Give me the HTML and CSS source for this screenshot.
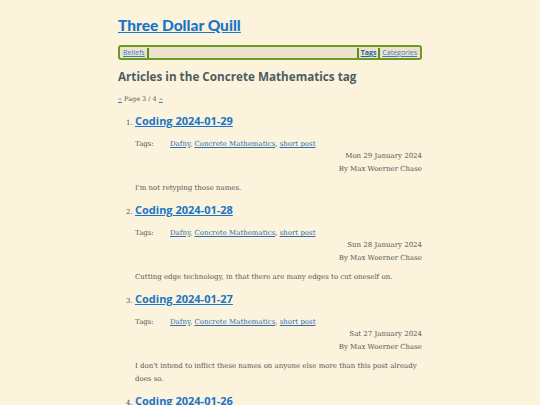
FILE: index.html
```html
<!DOCTYPE html>
<html>
<head>
<meta charset="utf-8">
<link rel="stylesheet" href="styles.css">
</head>
<body>
<div class="page">
  <header class="site-header">
    <h1 class="site-title"><a href="#">Three Dollar Quill</a></h1>
    <nav class="nav">
      <a class="nav-link" href="#">Beliefs</a>
      <span class="sep"></span>
      <span class="nav-fill"></span>
      <span class="sep"></span>
      <a class="nav-link nav-current" href="#">Tags</a>
      <span class="sep"></span>
      <a class="nav-link" href="#">Categories</a>
    </nav>
  </header>
  <h2 class="page-heading">Articles in the Concrete Mathematics tag</h2>
  <p class="pager"><a href="#">«</a> Page 3 / 4 <a href="#">»</a></p>
  <ol class="articles">
    <li class="article">
      <h3 class="article-title"><a href="#">Coding 2024-01-29</a></h3>
      <div class="tags"><span class="tags-label">Tags:</span><span class="tags-list"><a href="#">Dafny</a>, <a href="#">Concrete Mathematics</a>, <a href="#">short post</a></span></div>
      <div class="meta">Mon 29 January 2024</div>
      <div class="meta">By Max Woerner Chase</div>
      <p class="summary">I'm not retyping those names.</p>
    </li>
    <li class="article">
      <h3 class="article-title"><a href="#">Coding 2024-01-28</a></h3>
      <div class="tags"><span class="tags-label">Tags:</span><span class="tags-list"><a href="#">Dafny</a>, <a href="#">Concrete Mathematics</a>, <a href="#">short post</a></span></div>
      <div class="meta">Sun 28 January 2024</div>
      <div class="meta">By Max Woerner Chase</div>
      <p class="summary">Cutting edge technology, in that there are many edges to cut oneself on.</p>
    </li>
    <li class="article">
      <h3 class="article-title"><a href="#">Coding 2024-01-27</a></h3>
      <div class="tags"><span class="tags-label">Tags:</span><span class="tags-list"><a href="#">Dafny</a>, <a href="#">Concrete Mathematics</a>, <a href="#">short post</a></span></div>
      <div class="meta">Sat 27 January 2024</div>
      <div class="meta">By Max Woerner Chase</div>
      <p class="summary">I don't intend to inflict these names on anyone else more than this post already does so.</p>
    </li>
    <li class="article">
      <h3 class="article-title"><a href="#">Coding 2024-01-26</a></h3>
      <div class="tags"><span class="tags-label">Tags:</span><span class="tags-list"><a href="#">Dafny</a>, <a href="#">Concrete Mathematics</a>, <a href="#">short post</a></span></div>
      <div class="meta">Fri 26 January 2024</div>
      <div class="meta">By Max Woerner Chase</div>
    </li>
  </ol>
</div>
</body>
</html>
```
FILE: styles.css
```css
html, body {
  margin: 0;
  padding: 0;
  background: #fcf3dc;
}
body {
  font-family: "DejaVu Serif", serif;
  color: #555555;
  font-size: 7px;
}
.page {
  width: 304px;
  margin: 0 auto;
}
.site-header {
  padding-top: 15px;
}
.site-title {
  margin: 0;
  font-family: Lato, sans-serif;
  font-weight: 900;
  font-size: 15.5px;
  line-height: 20px;
}
.site-title a {
  color: #1a74c8;
}
.nav {
  margin-top: 10px;
  display: flex;
  align-items: center;
  height: 11px;
  border: 2px solid #6c9a22;
  border-radius: 3px;
  background: #ece4cf;
  padding: 0 2px;
  font-family: "Open Sans", sans-serif;
  font-size: 7px;
  line-height: 11px;
}
.nav-link {
  color: #3b7cbc;
  padding: 0 1px;
}
.nav-current {
  font-weight: 700;
  color: #2a62a0;
}
.sep {
  width: 2px;
  height: 10px;
  background: #5e8e1a;
  margin: 0 1px;
}
.nav-fill {
  flex: 1;
}
.page-heading {
  margin: 8px 0 0;
  font-family: "Open Sans", sans-serif;
  font-weight: 700;
  font-size: 11.7px;
  line-height: 16px;
  color: #4d5d63;
}
.pager {
  margin: 10px 0 0;
  font-size: 6.5px;
  line-height: 10px;
}
.pager a {
  color: #3b7cbc;
}
.articles {
  margin: 8px 0 0;
  padding-left: 17px;
  list-style: decimal;
}
.article {
  margin-bottom: 6.5px;
}
.article::marker {
  font-size: 7px;
}
.article-title {
  margin: 0;
  font-family: "Open Sans", sans-serif;
  font-weight: 700;
  font-size: 11px;
  line-height: 18px;
}
.article-title a {
  color: #1a74c8;
}
.tags {
  display: flex;
  margin-top: 8px;
  line-height: 12px;
}
.tags-label {
  width: 35px;
}
.tags-list a {
  color: #2e6eae;
}
.meta {
  text-align: right;
  line-height: 12.5px;
}
.summary {
  margin: 6.5px 0 0;
  line-height: 13px;
}
```
